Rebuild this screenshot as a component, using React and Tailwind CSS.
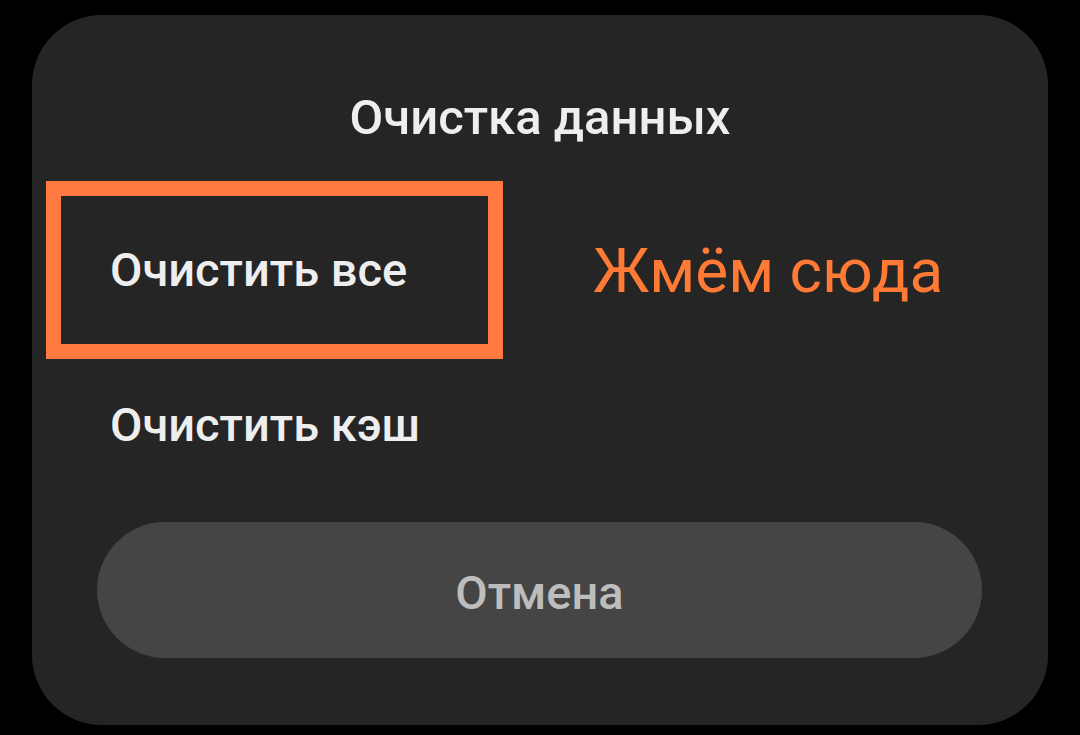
import React from 'react';

const font = { fontFamily: 'Roboto, "Noto Sans", sans-serif' };

export default function App() {
  return (
    <div className="w-[1080px] h-[735px] bg-black pt-[15px] pl-[32px] overflow-hidden" style={font}>
      <div className="w-[1016px] h-[710px] bg-[#252525] rounded-[70px] flex flex-col">
        {/* Title */}
        <div className="pt-[73px] h-[133px] text-center text-[49px] leading-[60px] font-medium text-[#eeeeee]">
          Очистка данных
        </div>

        {/* Highlighted option */}
        <div className="mt-[33px] flex items-center">
          <div className="ml-[14px] w-[457px] h-[178px] border-[15px] border-[#ff7b42] flex items-center pl-[49px]">
            <span className="text-[47px] font-medium text-[#eeeeee]">Очистить все</span>
          </div>
          <span className="ml-[90px] text-[62px] text-[#ff7a35]">Жмём сюда</span>
        </div>

        {/* Second option */}
        <div className="h-[132px] flex items-center pl-[78px]">
          <span className="text-[47px] font-medium text-[#eeeeee]">Очистить кэш</span>
        </div>

        {/* Cancel */}
        <button className="mt-[31px] ml-[65px] mr-[66px] h-[136px] rounded-full bg-[#454545] pt-[6px] text-[47px] font-medium text-[#bdbdbd]">
          Отмена
        </button>
      </div>
    </div>
  );
}
